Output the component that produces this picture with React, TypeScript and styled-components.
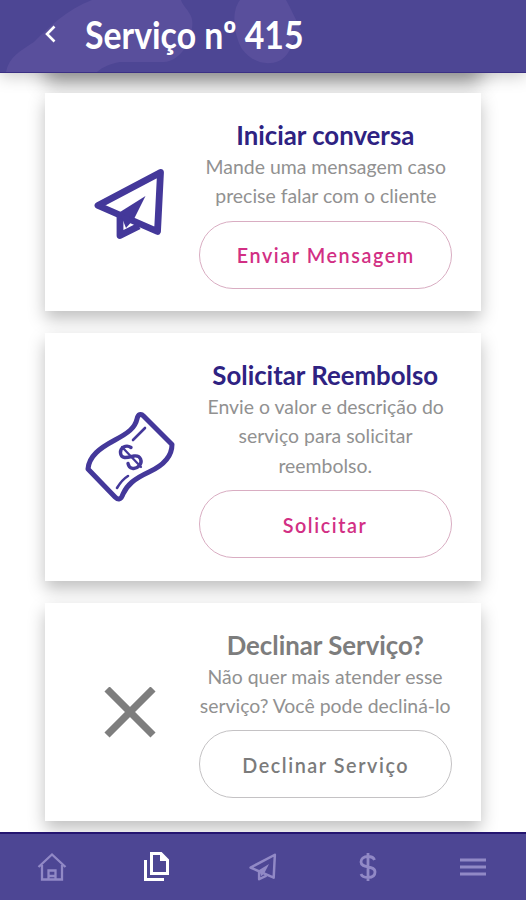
import React from "react";
import styled, { createGlobalStyle } from "styled-components";

const GlobalStyle = createGlobalStyle`
  * { box-sizing: border-box; }
  body { margin: 0; background: #fff; font-family: Lato, sans-serif; }
`;

const Screen = styled.div`
  display: flex;
  flex-direction: column;
  width: 526px;
  height: 900px;
  overflow: hidden;
  background: #fff;
`;

const Header = styled.header`
  position: relative;
  z-index: 2;
  flex: none;
  display: flex;
  align-items: center;
  height: 73px;
  padding: 0 0 4px 43px;
  background: #4d4694;
  border-bottom: 1px solid #3b3084;
  box-shadow: 0 3px 16px rgba(0, 0, 0, 0.22);
`;

const HeaderPattern = styled.svg`
  position: absolute;
  left: 0;
  top: 0;
`;

const BackButton = styled.button`
  position: relative;
  display: flex;
  width: 42px;
  padding: 0;
  border: 0;
  background: none;
`;

const PageTitle = styled.h1`
  position: relative;
  margin: 0;
  color: #fff;
  font-size: 38px;
  line-height: 48px;
  font-weight: 700;
  white-space: nowrap;
  transform: scaleX(0.89);
  transform-origin: left;
`;

const Content = styled.main`
  flex: 1;
  min-height: 0;
  display: flex;
  flex-direction: column;
  align-items: center;
  gap: 22px;
  overflow: hidden;
`;

const Card = styled.section<{ $height: number }>`
  flex: none;
  display: grid;
  grid-template-columns: 154px 253px;
  width: 436px;
  height: ${(p) => p.$height}px;
  padding-top: 26px;
  background: #fff;
  box-shadow: 0 8px 16px rgba(0, 0, 0, 0.25);
`;

const PreviousCard = styled(Card)`
  margin-top: -22px;
  padding: 0;
  box-shadow: 0 11px 20px rgba(0, 0, 0, 0.42);
`;

const IconCell = styled.div`
  display: flex;
  align-items: center;
  justify-content: center;
  padding: 0 0 23px 15px;
`;

const Body = styled.div`
  display: flex;
  flex-direction: column;
  align-items: center;
`;

const CardTitle = styled.h2<{ $muted?: boolean }>`
  margin: 0 0 1px;
  color: ${(p) => (p.$muted ? "#7d7d7d" : "#2e2282")};
  font-size: 27px;
  line-height: 32px;
  font-weight: 700;
  white-space: nowrap;
  transform: scaleX(0.955);
`;

const Line = styled.span`
  color: #919191;
  font-size: 20px;
  line-height: 29.4px;
  white-space: nowrap;
  transform: scaleX(0.971);
`;

const ActionButton = styled.button<{ $muted?: boolean }>`
  display: flex;
  align-items: center;
  justify-content: center;
  width: 253px;
  height: 68px;
  margin-top: 10px;
  padding: 1px 0 0;
  border: 1px solid ${(p) => (p.$muted ? "#c4c2c4" : "#d9adc2")};
  border-radius: 34px;
  background: #fff;
  color: ${(p) => (p.$muted ? "#7b7b7b" : "#d22f84")};
  font-family: Lato, sans-serif;
  font-size: 21.5px;
  font-weight: 600;
`;

const ButtonLabel = styled.span`
  letter-spacing: 1.7px;
  white-space: nowrap;
  transform: scaleX(0.92);
`;

const NavBar = styled.nav`
  position: relative;
  z-index: 2;
  flex: none;
  display: grid;
  grid-template-columns: repeat(5, 105.3px);
  height: 68px;
  padding-bottom: 1px;
  background: #4d4694;
  border-top: 2px solid #241570;
`;

const NavItem = styled.a<{ $active?: boolean }>`
  display: flex;
  align-items: center;
  justify-content: center;
  padding-right: 1px;
  color: ${(p) => (p.$active ? "#fff" : "#9189c6")};
`;

const Purple = styled.span`
  display: flex;
  color: #44389a;
`;

const Plane = ({ size = 72 }: { size?: number }) => (
  <svg width={size} height={size} viewBox="0 0 72 72" fill="none" stroke="currentColor" strokeLinejoin="round" strokeWidth={size < 40 ? 6.4 : 6.8}>
    <path d="M66.5 4.500 4 37.500 63.500 63.500Z" />
    <path d="M26 48V67.500L45 58" />
    <path d="M51.500 28 26 44V50L39 53Z" fill="currentColor" stroke="none" />
    <path d="M26 45 40 51 32 60Z" fill="currentColor" stroke="none" />
  </svg>
);

const Banknote = () => (
  <svg width="92" height="92" viewBox="0 0 92 92" fill="none" stroke="#44389a" strokeLinecap="round" strokeLinejoin="round">
    <path strokeWidth="5" d="M59.500 4 88 32.500C88 45 78 54 65 60C50 67 43 73 39 82C37 88 34 88 31 85L4 57C5 44 16 36 31 28C44 21 51 16 53 7C54 2 57 1.500 59.500 4Z" />
    <path strokeWidth="2.600" d="M61 16 49 28M44 64C39 67 36 71 33 76" />
    <path strokeWidth="3.400" d="M47 35.500C42 32 36 36 36.500 41C37 48 45 45 50 44C57 43 59 50 55 54C51 58 45 57 44 51.500" />
    <path strokeWidth="2.200" d="M38 35 57 55" />
  </svg>
);

const Cross = () => (
  <svg width="52" height="52" viewBox="0 0 52 52" fill="none" stroke="#7e7e7e" strokeWidth="7.200">
    <path d="M3 2 49 48M49 2 3 48" />
  </svg>
);

type ServiceCard = {
  height: number;
  title: string;
  lines: string[];
  action: string;
  muted?: boolean;
  icon: React.ReactNode;
};

const cards: ServiceCard[] = [
  {
    height: 218,
    title: "Iniciar conversa",
    lines: ["Mande uma mensagem caso", "precise falar com o cliente"],
    action: "Enviar Mensagem",
    icon: <Purple><Plane /></Purple>,
  },
  {
    height: 247.5,
    title: "Solicitar Reembolso",
    lines: ["Envie o valor e descrição do", "serviço para solicitar", "reembolso."],
    action: "Solicitar",
    icon: <Banknote />,
  },
  {
    height: 218.5,
    title: "Declinar Serviço?",
    lines: ["Não quer mais atender esse", "serviço? Você pode decliná-lo"],
    action: "Declinar Serviço",
    muted: true,
    icon: <Cross />,
  },
];

export default function App() {
  return (
    <>
      <GlobalStyle />
      <Screen>
        <Header>
          <HeaderPattern width="526" height="72" fill="#594f9c">
            <path d="M6 72C9 57 20 51 34 42C48 28 66 10 92 0H181C184 9 195 14 192 28C190 45 179 61 164 62H120C109 64 103 67 97 72Z" />
            <path d="M240 0H286C291 9 296 20 301 30C291 40 292 55 279 61C264 67 250 60 242 49C235 37 230 13 240 0Z" />
          </HeaderPattern>
          <BackButton aria-label="Voltar">
            <svg width="16" height="18" viewBox="0 0 16 18" fill="none" stroke="#fff" strokeWidth="2.600">
              <path d="M11.500 1.500 4 9 11.500 16.500" />
            </svg>
          </BackButton>
          <PageTitle>Serviço nº 415</PageTitle>
        </Header>
        <Content>
          <PreviousCard $height={20} />
          {cards.map((card) => (
            <Card key={card.title} $height={card.height}>
              <IconCell>{card.icon}</IconCell>
              <Body>
                <CardTitle $muted={card.muted}>{card.title}</CardTitle>
                {card.lines.map((line) => (
                  <Line key={line}>{line}</Line>
                ))}
                <ActionButton $muted={card.muted}>
                  <ButtonLabel>{card.action}</ButtonLabel>
                </ActionButton>
              </Body>
            </Card>
          ))}
        </Content>
        <NavBar>
          <NavItem aria-label="Início">
            <svg width="30" height="30" viewBox="0 0 30 30" fill="none" stroke="currentColor" strokeWidth="2.300">
              <path d="M1.500 15 15 2.500 28.500 15M5 13V27.500H25V13M11.500 27V18.500H18.500V27M11.500 24H18.500" />
            </svg>
          </NavItem>
          <NavItem $active aria-label="Serviços">
            <svg width="28" height="31" viewBox="0 0 28 31" fill="none" stroke="currentColor" strokeWidth="3">
              <path d="M8.500 2.500H18L24.500 9V22.500H8.500Z" />
              <path d="M17 2V10H25Z" fill="currentColor" stroke="none" />
              <path d="M2.500 9V28.500H21" />
            </svg>
          </NavItem>
          <NavItem aria-label="Mensagens"><Plane size={28} /></NavItem>
          <NavItem aria-label="Pagamentos">
            <svg width="20" height="30" viewBox="0 0 20 30" fill="none" stroke="currentColor" strokeWidth="2.800">
              <path d="M16.500 8C15.500 5 13 4.500 10 4.500C5.500 4.500 3 7 3 10C3 17 17 12.500 17 20C17 24 14 25.500 10 25.500C6 25.500 4 24.500 3 22M10 1V29" />
            </svg>
          </NavItem>
          <NavItem aria-label="Menu">
            <svg width="26" height="20" viewBox="0 0 26 20" stroke="currentColor" strokeWidth="3">
              <path d="M0 3H26M0 10H26M0 17H26" />
            </svg>
          </NavItem>
        </NavBar>
      </Screen>
    </>
  );
}
